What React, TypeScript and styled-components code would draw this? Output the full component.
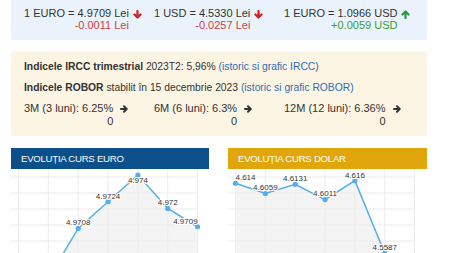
import React from "react";
import styled, { createGlobalStyle } from "styled-components";

const GlobalStyle = createGlobalStyle`
  body {
    margin: 0;
    background: #fff;
    color: #333;
    font-family: "Liberation Sans", Arial, sans-serif;
  }
`;

const Page = styled.div`
  width: 416px;
  padding-left: 11px;
  display: flex;
  flex-direction: column;
`;

const RatesBox = styled.div`
  background: #eaf3fb;
  padding: 7px 13px 9px;
  display: grid;
  grid-template-columns: repeat(3, 130px);
  font-size: 11px;
  line-height: 12px;
`;

const RateItem = styled.div`
  display: flex;
  align-items: flex-start;
`;

const RateText = styled.div`
  text-align: right;
  white-space: nowrap;
`;

const Change = styled.div<{ $up?: boolean }>`
  color: ${(p) => (p.$up ? "#3c9b3c" : "#d23c3f")};
`;

const Trend = styled.span<{ $color: string; $gap: number; $top: number }>`
  display: inline-flex;
  color: ${(p) => p.$color};
  margin-left: ${(p) => p.$gap}px;
  margin-top: ${(p) => p.$top}px;
`;

const RoborBox = styled.div`
  margin-top: 11px;
  background: #fcf5e4;
  padding: 9px 13px 8px;
  font-size: 11px;
`;

const InfoLine = styled.p`
  margin: 0 0 8px;
  font-size: 10.3px;
  line-height: 13px;
  white-space: nowrap;
`;

const Link = styled.a`
  color: #2f6db5;
  text-decoration: none;
`;

const RoborRow = styled.div`
  display: grid;
  grid-template-columns: repeat(3, 130px);
  line-height: 13px;
`;

const Charts = styled.div`
  margin-top: 12px;
  display: grid;
  grid-template-columns: 198px 199px;
  column-gap: 19px;
`;

const Panel = styled.div`
  display: flex;
  flex-direction: column;
  background: #fff;
`;

const PanelHead = styled.div<{ $bg: string }>`
  height: 21px;
  background: ${(p) => p.$bg};
  color: #fff;
  display: flex;
  align-items: center;
  padding-left: 10px;
  font-size: 9.6px;
  letter-spacing: -0.25px;
`;

const Plot = styled.svg`
  display: block;
  width: 100%;
  height: 110px;
`;

const rot = { down: 0, up: 180, right: -90 };

function Arrow({ dir, size }: { dir: "down" | "up" | "right"; size: number }) {
  return (
    <svg width={size} height={size} viewBox="0 0 10 10" style={{ transform: `rotate(${rot[dir]}deg)` }}>
      <path
        d="M5 1.2 V8.2 M1.6 5 L5 8.4 L8.4 5"
        fill="none"
        stroke="currentColor"
        strokeWidth={2.5}
        strokeLinecap="round"
        strokeLinejoin="round"
      />
    </svg>
  );
}

type Pt = { v: number; pos?: "mid" | "start" | "end" | "below"; hide?: boolean };

const X0 = 7.5;
const STEP = 29.85;

function Chart({ data, top, k, width }: { data: Pt[]; top: number; k: number; width: number }) {
  const max = Math.max(...data.map((d) => d.v));
  const pts = data.map((d, i) => ({ ...d, x: X0 + i * STEP, y: top + (max - d.v) * k }));
  const line = pts.map((p) => `${p.x},${p.y}`).join(" ");
  const area = `${line} ${pts[pts.length - 1].x},110 ${pts[0].x},110`;
  return (
    <Plot viewBox={`0 0 ${width} 110`}>
      <polygon points={area} fill="#f4f4f5" />
      {pts.map((p, i) => (
        <line key={"v" + i} x1={p.x} x2={p.x} y1={0} y2={110} stroke="#ececec" strokeWidth={1} />
      ))}
      {[8, 24, 40, 56, 72, 88].map((y) => (
        <line key={"h" + y} x1={0} x2={pts[pts.length - 1].x} y1={y} y2={y} stroke="#ececec" strokeWidth={1} />
      ))}
      <polyline points={line} fill="none" stroke="#55aee9" strokeWidth={1.5} />
      {pts.map((p, i) => (
        <circle key={"c" + i} cx={p.x} cy={p.y} r={2.6} fill="#55aee9" />
      ))}
      {pts
        .filter((p) => !p.hide)
        .map((p, i) => {
          const below = p.pos === "below";
          const anchor = p.pos === "start" ? "start" : p.pos === "end" ? "end" : "middle";
          return (
            <text
              key={"t" + i}
              x={p.x}
              y={below ? p.y + 8.4 : p.y - 3.2}
              textAnchor={anchor}
              fontSize={8}
              fill="#333"
              stroke="#fff"
              strokeWidth={2}
              paintOrder="stroke"
              fontFamily='"Liberation Sans", Arial, sans-serif'
            >
              {p.v}
            </text>
          );
        })}
    </Plot>
  );
}

const euro: Pt[] = [
  { v: 4.967, hide: true },
  { v: 4.9678, hide: true },
  { v: 4.9708 },
  { v: 4.9724 },
  { v: 4.974, pos: "below" },
  { v: 4.972 },
  { v: 4.9709, pos: "end" },
];

const dolar: Pt[] = [
  { v: 4.614, pos: "start" },
  { v: 4.6059 },
  { v: 4.6131 },
  { v: 4.6011 },
  { v: 4.616 },
  { v: 4.5587 },
  { v: 4.54, hide: true },
];

const rates = [
  { text: "1 EURO = 4.9709 Lei", change: "-0.0011 Lei", up: false },
  { text: "1 USD = 4.5330 Lei", change: "-0.0257 Lei", up: false },
  { text: "1 EURO = 1.0966 USD", change: "+0.0059 USD", up: true },
];

const robor = [
  { label: "3M (3 luni): 6.25%", delta: "0" },
  { label: "6M (6 luni): 6.3%", delta: "0" },
  { label: "12M (12 luni): 6.36%", delta: "0" },
];

export default function App() {
  return (
    <>
      <GlobalStyle />
      <Page>
        <RatesBox>
          {rates.map((r) => (
            <RateItem key={r.text}>
              <RateText>
                <div>{r.text}</div>
                <Change $up={r.up}>{r.change}</Change>
              </RateText>
              <Trend $color={r.up ? "#2f9a3c" : "#cc2424"} $gap={4} $top={3}>
                <Arrow dir={r.up ? "up" : "down"} size={9} />
              </Trend>
            </RateItem>
          ))}
        </RatesBox>

        <RoborBox>
          <InfoLine>
            <b>Indicele IRCC trimestrial</b> 2023T2: 5,96% <Link>(istoric si grafic IRCC)</Link>
          </InfoLine>
          <InfoLine>
            <b>Indicele ROBOR</b> stabilit în 15 decembrie 2023 <Link>(istoric si grafic ROBOR)</Link>
          </InfoLine>
          <RoborRow>
            {robor.map((r) => (
              <RateItem key={r.label}>
                <RateText>
                  <div>{r.label}</div>
                  <div>{r.delta}</div>
                </RateText>
                <Trend $color="#333" $gap={7} $top={3}>
                  <Arrow dir="right" size={8} />
                </Trend>
              </RateItem>
            ))}
          </RoborRow>
        </RoborBox>

        <Charts>
          <Panel>
            <PanelHead $bg="#0b4f8b">EVOLUȚIA CURS EURO</PanelHead>
            <Chart data={euro} top={6} k={16690} width={198} />
          </Panel>
          <Panel>
            <PanelHead $bg="#e0a60c">EVOLUȚIA CURS DOLAR</PanelHead>
            <Chart data={dolar} top={11.7} k={1267} width={199} />
          </Panel>
        </Charts>
      </Page>
    </>
  );
}
